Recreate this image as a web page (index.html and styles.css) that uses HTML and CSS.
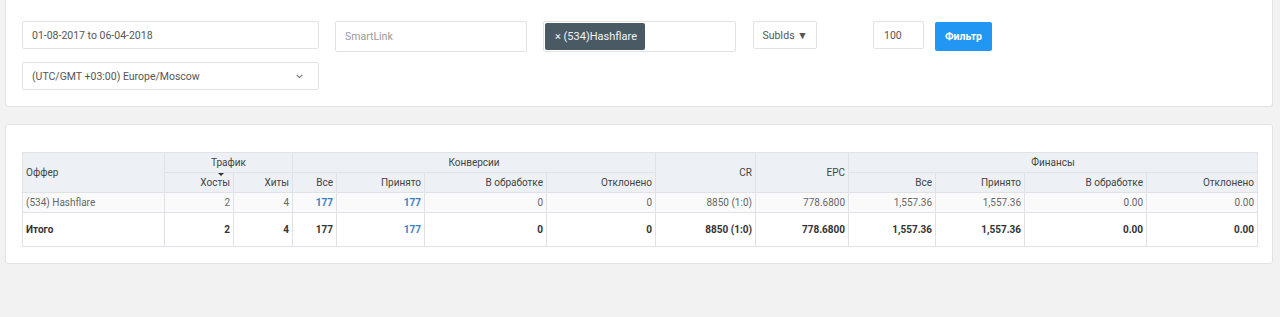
FILE: index.html
```html
<!DOCTYPE html>
<html lang="ru">
<head>
    <meta charset="UTF-8">
    <link rel="stylesheet" href="styles.css">
    <title>Статистика</title>
</head>
<body>
    <div class="panel panel-filters">
        <div class="filter-col">
            <input type="text" class="field field-date" value="01-08-2017 to 06-04-2018">
            <div class="field field-select">
                <span>(UTC/GMT +03:00) Europe/Moscow</span>
                <svg class="chevron" width="7" height="5" viewBox="0 0 7 5"><path d="M0.8 1 L3.5 3.6 L6.2 1" fill="none" stroke="#777" stroke-width="1.1"/></svg>
            </div>
        </div>
        <input type="text" class="field field-smart" placeholder="SmartLink">
        <div class="field field-tags">
            <span class="chip">× (534)Hashflare</span>
        </div>
        <button class="btn btn-subids">SubIds ▼</button>
        <input type="text" class="field field-limit" value="100">
        <button class="btn btn-filter">Фильтр</button>
    </div>

    <div class="panel panel-table">
        <table class="stats">
            <colgroup>
                <col class="w-offer"><col class="w-hosts"><col class="w-hits">
                <col class="w-all"><col class="w-acc"><col class="w-proc"><col class="w-rej">
                <col class="w-cr"><col class="w-epc">
                <col class="w-fall"><col class="w-facc"><col class="w-fproc"><col class="w-frej">
            </colgroup>
            <thead>
                <tr>
                    <th rowspan="2" class="left">Оффер</th>
                    <th colspan="2" class="center">Трафик</th>
                    <th colspan="4" class="center">Конверсии</th>
                    <th rowspan="2">CR</th>
                    <th rowspan="2">EPC</th>
                    <th colspan="4" class="center">Финансы</th>
                </tr>
                <tr>
                    <th class="sorted">Хосты<span class="sort-arrow"></span></th>
                    <th>Хиты</th>
                    <th>Все</th>
                    <th>Принято</th>
                    <th>В обработке</th>
                    <th>Отклонено</th>
                    <th>Все</th>
                    <th>Принято</th>
                    <th>В обработке</th>
                    <th>Отклонено</th>
                </tr>
            </thead>
            <tbody>
                <tr class="row-data">
                    <td class="left">(534) Hashflare</td>
                    <td>2</td>
                    <td>4</td>
                    <td><a class="link">177</a></td>
                    <td><a class="link">177</a></td>
                    <td>0</td>
                    <td>0</td>
                    <td>8850 (1:0)</td>
                    <td>778.6800</td>
                    <td>1,557.36</td>
                    <td>1,557.36</td>
                    <td>0.00</td>
                    <td>0.00</td>
                </tr>
                <tr class="row-total">
                    <td class="left">Итого</td>
                    <td>2</td>
                    <td>4</td>
                    <td>177</td>
                    <td><a class="link">177</a></td>
                    <td>0</td>
                    <td>0</td>
                    <td>8850 (1:0)</td>
                    <td>778.6800</td>
                    <td>1,557.36</td>
                    <td>1,557.36</td>
                    <td>0.00</td>
                    <td>0.00</td>
                </tr>
            </tbody>
        </table>
    </div>
</body>
</html>
```

FILE: styles.css
```css
body {
    margin: 0;
    padding: 0;
    background-color: #f2f2f2;
    font-family: Roboto, "Liberation Sans", Arial, sans-serif;
    color: #555;
}

.panel {
    width: 1268px;
    margin-left: 5px;
    box-sizing: border-box;
    background-color: #fff;
    border: 1px solid #e3e3e3;
    border-radius: 3px;
}

.panel-filters {
    display: flex;
    align-items: flex-start;
    border-top: none;
    border-radius: 0 0 3px 3px;
    padding: 21px 16px 16px 16px;
    height: 107px;
}

.filter-col {
    display: flex;
    flex-direction: column;
    gap: 13px;
    width: 297px;
}

.field {
    box-sizing: border-box;
    border: 1px solid #e2e2e2;
    border-radius: 2px;
    background-color: #fff;
    font-family: inherit;
    font-size: 10.5px;
    color: #555;
    padding: 0 9px;
    outline: none;
}

.field::placeholder {
    color: #999;
}

.field-date {
    width: 297px;
    height: 28px;
}

.field-select {
    width: 297px;
    height: 28px;
    display: flex;
    align-items: center;
    justify-content: space-between;
    padding-right: 15px;
}

.field-smart {
    margin-left: 16px;
    width: 192px;
    height: 31px;
}

.field-tags {
    margin-left: 16px;
    width: 193px;
    height: 31px;
    padding: 1px 1px;
}

.chip {
    display: inline-block;
    height: 27px;
    line-height: 27px;
    width: 100px;
    box-sizing: border-box;
    padding-left: 10px;
    background-color: #4a5a65;
    color: #f2f4f5;
    border-radius: 2px;
    font-size: 11px;
}

.btn {
    box-sizing: border-box;
    font-family: inherit;
    cursor: pointer;
    border-radius: 2px;
}

.btn-subids {
    margin-left: 17px;
    width: 64px;
    height: 28px;
    background-color: #fff;
    border: 1px solid #e2e2e2;
    color: #555;
    font-size: 10.5px;
    padding: 0;
}

.field-limit {
    margin-left: 56px;
    width: 51px;
    height: 28px;
    padding-left: 10px;
}

.btn-filter {
    margin-left: 11px;
    margin-top: 1px;
    width: 57px;
    height: 29px;
    background-color: #2196f3;
    border: none;
    color: #fff;
    font-size: 10.5px;
    font-weight: bold;
    padding: 0;
}

.panel-table {
    margin-top: 17px;
    padding: 27px 15px 16px 16px;
}

.stats {
    table-layout: fixed;
    border-collapse: collapse;
    width: 1235px;
    font-size: 10px;
}

.w-offer { width: 142px; }
.w-hosts { width: 69px; }
.w-hits { width: 59px; }
.w-all { width: 44px; }
.w-acc { width: 88px; }
.w-proc { width: 122px; }
.w-rej { width: 109px; }
.w-cr { width: 100px; }
.w-epc { width: 93px; }
.w-fall { width: 87px; }
.w-facc { width: 89px; }
.w-fproc { width: 122px; }
.w-frej { width: 111px; }

.stats th,
.stats td {
    border: 1px solid #dfe3e8;
    padding: 0 3px;
    text-align: right;
    white-space: nowrap;
}

.stats th {
    background-color: #edf1f5;
    font-weight: normal;
    color: #444;
    height: 19px;
}

.stats .left {
    text-align: left;
}

.stats .center {
    text-align: center;
}

.sorted {
    position: relative;
}

.sort-arrow {
    position: absolute;
    top: 0;
    right: 9px;
    width: 0;
    height: 0;
    border-left: 3px solid transparent;
    border-right: 3px solid transparent;
    border-top: 3px solid #333;
}

.row-data td {
    background-color: #fafafa;
    color: #666;
    height: 19px;
}

.row-total td {
    background-color: #fff;
    color: #333;
    font-weight: bold;
    height: 33px;
}

.link {
    color: #3c7ec4;
    font-weight: bold;
    cursor: pointer;
}
```
